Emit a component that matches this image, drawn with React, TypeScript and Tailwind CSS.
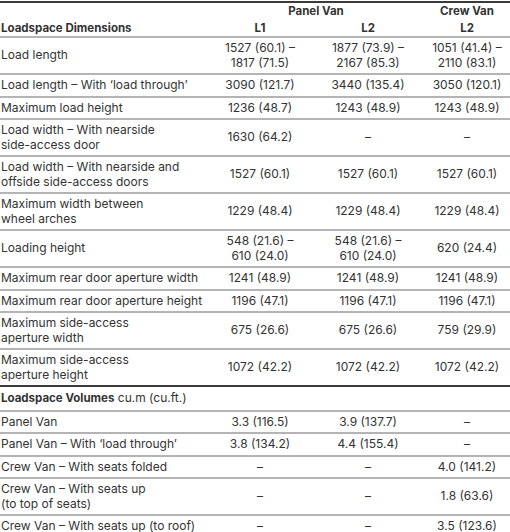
import React from 'react';

type Row = {
  label: React.ReactNode;
  l1: React.ReactNode;
  l2: React.ReactNode;
  crew: React.ReactNode;
};

const dims: Row[] = [
  { label: 'Load length', l1: <>1527 (60.1) –<br />1817 (71.5)</>, l2: <>1877 (73.9) –<br />2167 (85.3)</>, crew: <>1051 (41.4) –<br />2110 (83.1)</> },
  { label: 'Load length – With ‘load through’', l1: '3090 (121.7)', l2: '3440 (135.4)', crew: '3050 (120.1)' },
  { label: 'Maximum load height', l1: '1236 (48.7)', l2: '1243 (48.9)', crew: '1243 (48.9)' },
  { label: <>Load width – With nearside<br />side-access door</>, l1: '1630 (64.2)', l2: '–', crew: '–' },
  { label: <>Load width – With nearside and<br />offside side-access doors</>, l1: '1527 (60.1)', l2: '1527 (60.1)', crew: '1527 (60.1)' },
  { label: <>Maximum width between<br />wheel arches</>, l1: '1229 (48.4)', l2: '1229 (48.4)', crew: '1229 (48.4)' },
  { label: 'Loading height', l1: <>548 (21.6) –<br />610 (24.0)</>, l2: <>548 (21.6) –<br />610 (24.0)</>, crew: '620 (24.4)' },
  { label: 'Maximum rear door aperture width', l1: '1241 (48.9)', l2: '1241 (48.9)', crew: '1241 (48.9)' },
  { label: 'Maximum rear door aperture height', l1: '1196 (47.1)', l2: '1196 (47.1)', crew: '1196 (47.1)' },
  { label: <>Maximum side-access<br />aperture width</>, l1: '675 (26.6)', l2: '675 (26.6)', crew: '759 (29.9)' },
  { label: <>Maximum side-access<br />aperture height</>, l1: '1072 (42.2)', l2: '1072 (42.2)', crew: '1072 (42.2)' },
];

const volumes: Row[] = [
  { label: 'Panel Van', l1: '3.3 (116.5)', l2: '3.9 (137.7)', crew: '–' },
  { label: 'Panel Van – With ‘load through’', l1: '3.8 (134.2)', l2: '4.4 (155.4)', crew: '–' },
  { label: 'Crew Van – With seats folded', l1: '–', l2: '–', crew: '4.0 (141.2)' },
  { label: <>Crew Van – With seats up<br />(to top of seats)</>, l1: '–', l2: '–', crew: '1.8 (63.6)' },
  { label: 'Crew Van – With seats up (to roof)', l1: '–', l2: '–', crew: '3.5 (123.6)' },
];

function DataRow({ row, last }: { row: Row; last?: boolean }) {
  return (
    <div
      className={`grid grid-cols-[208px_104px_112px_86px] items-center py-[3px] leading-[14.5px] ${
        last ? 'border-b-2 border-[#3a3a3a]' : 'border-b-2 border-[#b4b4b4]'
      }`}
    >
      <div className="pl-px">{row.label}</div>
      <div className="text-center">{row.l1}</div>
      <div className="text-center">{row.l2}</div>
      <div className="text-center">{row.crew}</div>
    </div>
  );
}

export default function App() {
  return (
    <div
      className="w-[510px] h-[532px] overflow-hidden bg-white text-[12px] text-[#333]"
      style={{ fontFamily: 'Inter, "Open Sans", sans-serif' }}
    >
      <div className="border-t-2 border-[#3a3a3a] mt-px">
        {/* Header */}
        <div className="border-b-2 border-[#b4b4b4] font-bold text-[11.5px]">
          <div className="grid grid-cols-[208px_216px_86px] h-[16px] items-center leading-[14px]">
            <div />
            <div className="text-center">Panel Van</div>
            <div className="text-center">Crew Van</div>
          </div>
          <div className="grid grid-cols-[208px_104px_112px_86px] h-[17px] items-center leading-[14px]">
            <div className="pl-px">Loadspace Dimensions</div>
            <div className="text-center">L1</div>
            <div className="text-center">L2</div>
            <div className="text-center">L2</div>
          </div>
        </div>

        {dims.map((r, i) => (
          <DataRow key={i} row={r} last={i === dims.length - 1} />
        ))}

        {/* Volumes section */}
        <div className="border-b-2 border-[#b4b4b4] py-[4px] leading-[14.5px] pl-px">
          <span className="font-bold text-[11.5px]">Loadspace Volumes</span> cu.m (cu.ft.)
        </div>

        {volumes.map((r, i) => (
          <DataRow key={i} row={r} />
        ))}
      </div>
    </div>
  );
}
